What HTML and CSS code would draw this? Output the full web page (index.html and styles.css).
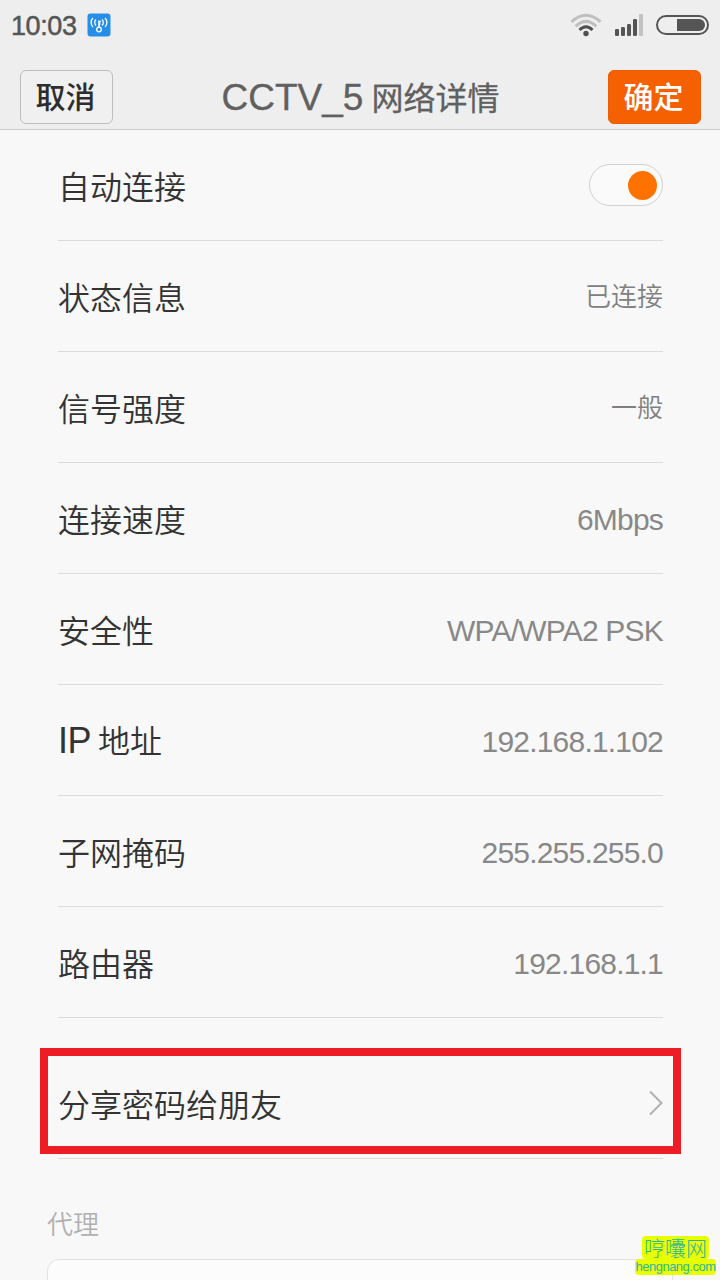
FILE: index.html
```
<!DOCTYPE html>
<html lang="zh-CN">
<head>
  <meta charset="UTF-8">
  <meta name="viewport" content="width=device-width, initial-scale=1">
  <title>CCTV_5 网络详情</title>
  <link rel="stylesheet" href="styles.css">
</head>
<body>
  <header class="top">
    <!-- Status bar -->
    <div class="status-bar">
      <span class="clock">10:03</span>
      <svg class="app-icon" width="24" height="24" viewBox="0 0 24 24" fill="none">
        <rect x="0.5" y="0.5" width="23" height="23" rx="3" fill="#268ee8"/>
        <g stroke="#fff" stroke-width="1.3">
          <path d="M6 5C3.500 7 3.500 12 6 14M9 6.500C7.300 8 7.300 11 9 12.500M18 5C20.500 7 20.500 12 18 14M15 6.500C16.700 8 16.700 11 15 12.500"/>
          <circle cx="12" cy="16.500" r="2.300"/>
          <path d="M12 14V7.500M12 8.500H14M12 11H13.500" stroke-width="1.600"/>
        </g>
      </svg>
      <div class="status-icons">
        <svg width="32" height="24" viewBox="0 0 32 24" fill="none">
          <path d="M1.500 8.800Q16 -4.300 30.500 8.800" stroke="#bfbfbf" stroke-width="3"/>
          <path d="M5.700 13.300Q16 3.300 26.300 13.300" stroke="#bfbfbf" stroke-width="3"/>
          <path d="M9.500 17Q16 10.500 22.500 17" stroke="#4f4f4f" stroke-width="3"/>
          <circle cx="16" cy="20.500" r="2.700" fill="#4f4f4f"/>
        </svg>
        <svg width="28" height="22" viewBox="0 0 28 22" fill="#555">
          <rect x="0" y="15" width="4" height="7" rx="1.200"/>
          <rect x="6" y="13" width="4" height="9" rx="1.200"/>
          <rect x="12" y="10" width="4" height="12" rx="1.200"/>
          <rect x="18" y="5" width="4" height="17" rx="1.200"/>
          <rect x="24" y="0" width="4" height="22" rx="1" fill="#c2c2c2"/>
        </svg>
        <svg width="53" height="20" viewBox="0 0 53 20">
          <rect x="1" y="1" width="51" height="18" rx="9" fill="none" stroke="#555" stroke-width="2"/>
          <path d="M21 4H43A6 6 0 0 1 43 16H21Z" fill="#555"/>
        </svg>
      </div>
    </div>

    <div class="title-bar">
      <button class="btn">取消</button>
      <h1><span class="ssid">CCTV_5</span> 网络详情</h1>
      <button class="btn btn-ok">确定</button>
    </div>
  </header>

  <main>
    <ul class="details">
      <li><span>自动连接</span><span class="switch"></span></li>
      <li><span>状态信息</span><span class="value">已连接</span></li>
      <li><span>信号强度</span><span class="value">一般</span></li>
      <li><span>连接速度</span><span class="value latin">6Mbps</span></li>
      <li><span>安全性</span><span class="value latin">WPA/WPA2 PSK</span></li>
      <li><span><span class="ip">IP</span> 地址</span><span class="value latin">192.168.1.102</span></li>
      <li><span>子网掩码</span><span class="value latin">255.255.255.0</span></li>
      <li><span>路由器</span><span class="value latin">192.168.1.1</span></li>
      <li class="share">
        <span>分享密码给朋友</span>
        <svg class="arrow" width="14" height="26" viewBox="0 0 14 26" fill="none">
          <path d="M1 1.500L12.500 13L1 24.500" stroke="#b0b0b0" stroke-width="2"/>
        </svg>
      </li>
    </ul>

    <h2>代理</h2>
    <div class="card"></div>
  </main>

  <div class="watermark">
    <span class="mark-name">哼囔网</span>
    <span class="mark-url">hengnang.com</span>
  </div>
</body>
</html>
```
FILE: styles.css
```
*, *::before, *::after {
  box-sizing: border-box;
}
body {
  margin: 0;
  height: 1280px;
  overflow: hidden;
  position: relative;
  background: #f8f8f8;
  color: #333;
  font-family: "Noto Sans CJK SC", sans-serif;
}

/* Header */
.top {
  height: 130px;
  background: #eee;
  border-bottom: 1px solid #ccc;
}
.status-bar {
  display: flex;
  align-items: center;
  height: 50px;
  padding: 0 11px;
}
.clock {
  width: 76px;
  font: 27px/50px "Liberation Sans", sans-serif;
  letter-spacing: -0.4px;
  color: #555;
  -webkit-text-stroke: 0.5px #555;
  padding-top: 2px;
}
.app-icon {
  display: block;
}
.status-icons {
  display: flex;
  align-items: center;
  gap: 13px;
  margin-left: auto;
}
.title-bar {
  display: flex;
  align-items: center;
  justify-content: space-between;
  height: 54px;
  margin-top: 20px;
  padding: 0 19px 0 20px;
}
.btn {
  width: 93px;
  height: 54px;
  padding: 0 2px 4px 0;
  border: 1px solid #bdbdbd;
  border-radius: 6px;
  background: #f0f0f0;
  color: #2d2d2d;
  font: 500 30px/44px "Noto Sans CJK SC", sans-serif;
}
.btn-ok {
  border-color: #eb5d05;
  background: #f56000;
  color: #fff;
}
h1 {
  margin: 0;
  color: #606060;
  font-size: 32px;
  font-weight: 400;
  line-height: 48px;
  white-space: nowrap;
  -webkit-text-stroke: 0.3px #606060;
}
.ssid {
  margin-right: 1px;
  font-family: "Liberation Sans", sans-serif;
  font-size: 37px;
}

/* Rows */
.details {
  margin: 0;
  padding: 0 57px 0 58px;
  list-style: none;
}
.details li {
  display: flex;
  align-items: center;
  justify-content: space-between;
  height: 111px;
  border-bottom: 1px solid #dcdcdc;
  font-size: 32px;
  font-weight: 350;
  line-height: 48px;
}
.value {
  color: #808080;
  font-size: 26px;
  padding-bottom: 3px;
}
.latin {
  font-family: "Liberation Sans", sans-serif;
  font-size: 30px;
  letter-spacing: -0.8px;
  color: #888;
  padding: 3px 0 0;
}
.ip {
  font-family: "Liberation Sans", sans-serif;
  font-size: 36px;
  letter-spacing: -0.6px;
}
.switch {
  display: flex;
  align-items: center;
  justify-content: flex-end;
  width: 74px;
  height: 42px;
  padding-right: 5px;
  border: 1px solid #d2d2d2;
  border-radius: 21px;
  background: #fafafa;
}
.switch::after {
  content: "";
  width: 29px;
  height: 29px;
  border-radius: 50%;
  background: #ff7200;
}

/* Share row with the red frame around it */
.details .share {
  position: relative;
  height: 141px;
  padding-top: 30px;
}
.share::before {
  content: "";
  position: absolute;
  top: 30px;
  left: -18px;
  right: -18px;
  height: 106px;
  border: 8px solid #ee1c25;
}
.arrow {
  margin-bottom: 1px;
}

h2 {
  margin: 45px 0 0 47px;
  color: #b0b0b0;
  font-size: 26px;
  font-weight: 350;
  line-height: 38px;
}
.card {
  height: 60px;
  margin: 17px 47px 0;
  border: 1px solid #e2e2e2;
  border-radius: 12px;
  background: #fcfcfc;
}

/* Site mark */
.watermark {
  position: absolute;
  top: 1236px;
  left: 635px;
  width: 81px;
  display: flex;
  flex-direction: column;
  align-items: center;
  color: #2fb5a0;
}
.watermark span {
  background: #e8ff00;
  border-radius: 4px;
  white-space: nowrap;
}
.mark-name {
  width: 67px;
  text-align: center;
  font-size: 21px;
  font-weight: 300;
  line-height: 23px;
}
.mark-url {
  width: 81px;
  text-align: center;
  font: 13px/16px "Liberation Sans", sans-serif;
  letter-spacing: -0.5px;
}
```
